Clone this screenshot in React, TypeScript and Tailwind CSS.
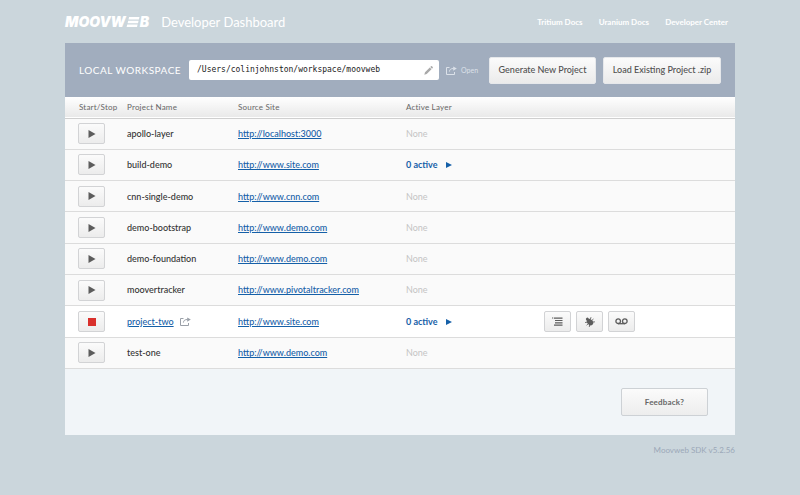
import type { ReactNode } from "react";

type Project = {
  name: string;
  site: string;
  layers?: number;
  running?: boolean;
};

const projects: Project[] = [
  { name: "apollo-layer", site: "http://localhost:3000" },
  { name: "build-demo", site: "http://www.site.com", layers: 0 },
  { name: "cnn-single-demo", site: "http://www.cnn.com" },
  { name: "demo-bootstrap", site: "http://www.demo.com" },
  { name: "demo-foundation", site: "http://www.demo.com" },
  { name: "moovertracker", site: "http://www.pivotaltracker.com" },
  { name: "project-two", site: "http://www.site.com", layers: 0, running: true },
  { name: "test-one", site: "http://www.demo.com" },
];

function Logo() {
  return (
    <span className="flex items-center font-['Inter',sans-serif] text-sm leading-4 font-black italic">
      MOOVW
      <svg viewBox="0 0 13 10" className="h-[10px] w-[14px]" fill="currentColor" aria-label="E">
        <path d="M2.6 0H13l-.6 2.4H2zM1.7 3.8h10.4l-.6 2.4H1.1zM.7 7.6h10.4l-.6 2.4H.1z" />
      </svg>
      B
    </span>
  );
}

function ShareIcon() {
  return (
    <svg viewBox="0 0 11 9" className="h-[9px] w-[11px]" fill="none" stroke="currentColor" strokeWidth="1">
      <path d="M3.5 1.5h-3v7h8V6" />
      <path d="M3.4 5.6C3.6 3.4 5 2.5 7.5 2.5" />
      <path d="M7.2.4 10.8 2.6 7.2 4.8z" fill="currentColor" stroke="none" />
    </svg>
  );
}

function PencilIcon() {
  return (
    <svg viewBox="0 0 9 9" className="h-[9px] w-[9px]" fill="currentColor">
      <path d="M.3 8.7 1 6.3 5.8 1.5 7.5 3.2 2.7 8zM6.3 1 7 .3q.5-.4 1 0l.7.7q.4.5 0 1L8 2.7z" />
    </svg>
  );
}

function ListIcon() {
  return (
    <svg viewBox="0 0 11 9" className="h-[9px] w-[11px]" fill="currentColor">
      <path d="M0 .5h1.3v1H0zM2 .5h8.5v1.2H2zM3 2.9h7.5v1.2H3zM3 5.2h7.5v1.2H3zM2 7.5h8.5v1.2H2z" />
    </svg>
  );
}

function BugIcon() {
  return (
    <svg viewBox="0 0 11 11" className="h-[11px] w-[11px]">
      <g transform="rotate(-42 5.5 5.5)">
        <ellipse cx="5.5" cy="6.3" rx="2.7" ry="3.6" fill="currentColor" />
        <circle cx="5.5" cy="2.4" r="1.5" fill="currentColor" />
        <path
          d="M3.5 4.5 1.5 3.3M3 6.3H.9M3.5 8 1.7 9.4M7.5 4.5l2-1.2M8 6.3h2.1M7.5 8l1.8 1.4"
          stroke="currentColor"
          strokeWidth=".8"
        />
      </g>
    </svg>
  );
}

function TapeIcon() {
  return (
    <svg viewBox="0 0 13 7" className="h-[7px] w-[13px]" fill="none" stroke="currentColor" strokeWidth="1.3">
      <circle cx="3.2" cy="3.2" r="2.3" />
      <circle cx="9.8" cy="3.2" r="2.3" />
      <path d="M3 5.7h7" />
    </svg>
  );
}

function PlayIcon() {
  return (
    <svg viewBox="0 0 8 8" className="h-2 w-2" fill="currentColor">
      <path d="M.5 0 7.5 4 .5 8z" />
    </svg>
  );
}

function SmallButton({ label, children }: { label: string; children: ReactNode }) {
  return (
    <button
      type="button"
      aria-label={label}
      className="flex h-[21px] w-[27px] items-center justify-center rounded-xs border border-[#d2d3d5] bg-linear-to-b from-[#fbfbfb] to-[#ececec] text-[#5c5c5c]"
    >
      {children}
    </button>
  );
}

const toolbarButton =
  "h-[27px] rounded-xs border border-[#e6e8eb] bg-linear-to-b from-[#fbfbfb] to-[#ebebeb] text-[9px] font-medium text-[#505050]";

export default function App() {
  return (
    <div className="min-h-screen bg-[#cbd6dc] font-['Lato',sans-serif]">
      <div className="mx-auto max-w-[670px]">
        <header className="flex h-[43px] items-center justify-between text-white">
          <div className="flex items-center gap-3">
            <Logo />
            <h1 className="text-[13px] leading-4">Developer Dashboard</h1>
          </div>
          <nav className="flex gap-4 pr-[7px] text-[8px] font-bold">
            <a href="#tritium">Tritium Docs</a>
            <a href="#uranium">Uranium Docs</a>
            <a href="#center">Developer Center</a>
          </nav>
        </header>

        <main className="bg-[#f1f5f8]">
          <div className="flex h-[54px] items-center bg-[#a1adbe] pr-[14px] pl-[14px]">
            <label htmlFor="workspace" className="w-[110px] text-[10px] tracking-wider text-white">
              LOCAL WORKSPACE
            </label>
            <div className="flex h-5 w-[250px] items-center rounded-xs bg-white pr-[6px] pl-2">
              <input
                id="workspace"
                type="text"
                defaultValue="/Users/colinjohnston/workspace/moovweb"
                className="min-w-0 flex-1 font-['DejaVu_Sans_Mono',monospace] text-[8px] text-[#222] outline-none"
              />
              <button type="button" aria-label="Edit workspace" className="text-[#a9a9a9]">
                <PencilIcon />
              </button>
            </div>
            <a href="#open" className="ml-[7px] flex items-center gap-1 text-[7px] text-[#dbe1e9]">
              <ShareIcon />
              Open
            </a>
            <div className="ml-auto flex gap-[7px]">
              <button type="button" className={`${toolbarButton} w-[107px]`}>
                Generate New Project
              </button>
              <button type="button" className={`${toolbarButton} w-[118px]`}>
                Load Existing Project .zip
              </button>
            </div>
          </div>

          <table className="h-[272px] w-full table-fixed text-left text-[9px]">
            <thead>
              <tr className="h-[21px] border-b border-[#cfcfcf] bg-linear-to-b from-white to-[#e9e9e9] text-[8px] tracking-wide text-[#666]">
                <th className="w-[62px] pl-[14px] font-normal whitespace-nowrap">Start/Stop</th>
                <th className="w-[111px] font-normal">Project Name</th>
                <th className="w-[168px] font-normal">Source Site</th>
                <th className="w-[138px] font-normal">Active Layer</th>
                <th aria-label="Tools" />
              </tr>
            </thead>
            <tbody>
              {projects.map((p) => (
                <tr
                  key={p.name}
                  className={`border-b border-[#dcdcdc] ${p.running ? "bg-white" : "bg-[#fafafa]"}`}
                >
                  <td className="pl-[13px]">
                    <SmallButton label={`${p.running ? "Stop" : "Start"} ${p.name}`}>
                      {p.running ? <span className="size-2 bg-[#d9302c]" /> : <PlayIcon />}
                    </SmallButton>
                  </td>
                  <td className="font-medium text-[#333]">
                    {p.running ? (
                      <div className="flex items-center gap-[6px]">
                        <a href="#project" className="text-[#1560a8] underline">
                          {p.name}
                        </a>
                        <span className="text-[#9aa0a8]">
                          <ShareIcon />
                        </span>
                      </div>
                    ) : (
                      p.name
                    )}
                  </td>
                  <td className="font-medium">
                    <a href={p.site} className="text-[#1560a8] underline">
                      {p.site}
                    </a>
                  </td>
                  <td>
                    {p.layers === undefined ? (
                      <span className="text-[#c4c4c4]">None</span>
                    ) : (
                      <button type="button" className="flex items-center gap-2 font-bold text-[#1560a8]">
                        {p.layers} active
                        <svg viewBox="0 0 6 6" className="h-[6px] w-[6px]" fill="currentColor">
                          <path d="M0 0 6 3 0 6z" />
                        </svg>
                      </button>
                    )}
                  </td>
                  <td>
                    {p.running && (
                      <div className="flex gap-[5px]">
                        <SmallButton label="View log">
                          <ListIcon />
                        </SmallButton>
                        <SmallButton label="Debug">
                          <BugIcon />
                        </SmallButton>
                        <SmallButton label="Record">
                          <TapeIcon />
                        </SmallButton>
                      </div>
                    )}
                  </td>
                </tr>
              ))}
            </tbody>
          </table>

          <div className="flex justify-end px-[27px] pt-[19px] pb-[19px]">
            <button
              type="button"
              className="h-7 w-[87px] rounded-xs border border-[#cdd1d5] bg-linear-to-b from-[#fbfbfb] to-[#ededed] text-[8px] font-bold tracking-wide text-[#666]"
            >
              Feedback?
            </button>
          </div>
        </main>

        <footer className="pt-[9px] text-right text-[8px] leading-3 text-[#9ba8b8]">Moovweb SDK v5.2.56</footer>
      </div>
    </div>
  );
}
